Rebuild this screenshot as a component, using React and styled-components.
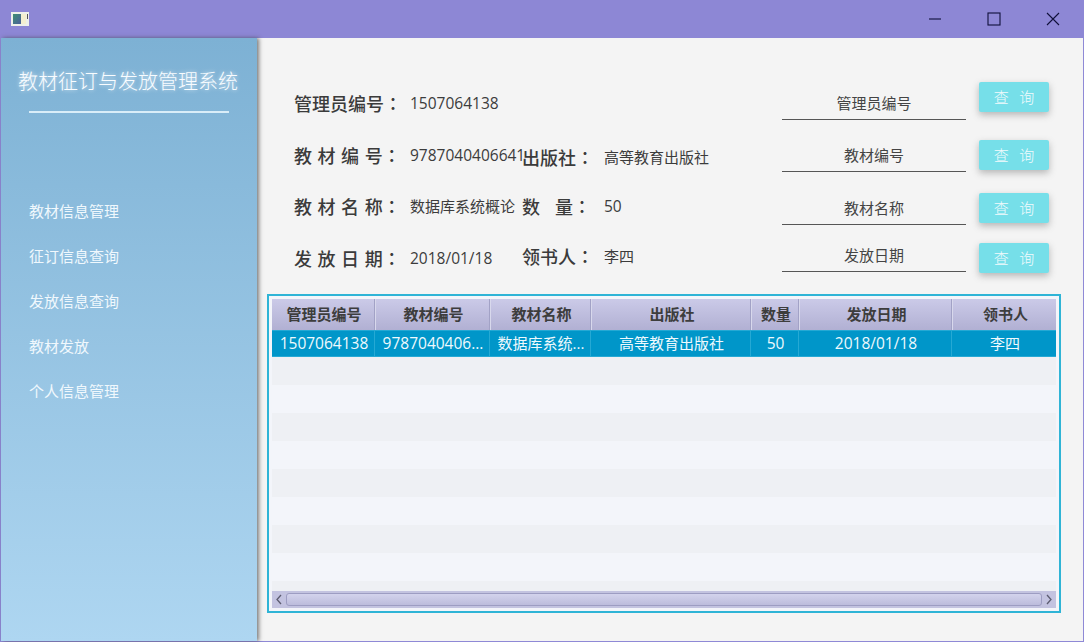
import React from "react";
import styled, { createGlobalStyle } from "styled-components";

const Global = createGlobalStyle`
  html, body { margin: 0; padding: 0; }
  body { width: 1084px; height: 642px; overflow: hidden; background: #f4f4f4; }
  * { box-sizing: border-box; }
`;

const FONT = `"Open Sans", "Noto Sans CJK SC", sans-serif`;

const Win = styled.div`
  width: 1084px; height: 642px; display: flex; flex-direction: column;
  font-family: ${FONT}; border: 1px solid #8f89d6; border-top: 0; background: #f4f4f4;
`;
const TitleBar = styled.div`
  height: 38px; flex: none; margin: 0 -1px; background: #8d87d5;
  display: flex; align-items: center; padding: 0 2px 0 11px;
`;
const Controls = styled.div`
  margin-left: auto; display: flex;
`;
const CtrlBtn = styled.div`
  width: 59px; height: 38px; display: flex; align-items: center; justify-content: center;
`;
const Body = styled.div`
  flex: 1; display: flex; min-height: 0;
`;
const Side = styled.aside`
  width: 256px; flex: none; display: flex; flex-direction: column; align-items: center;
  background: linear-gradient(180deg, #7db1d4 0%, #aed6f1 100%);
  box-shadow: 2px 0 4px rgba(60, 60, 60, .65);
  position: relative; z-index: 1; padding-top: 30px;
`;
const Brand = styled.h1`
  margin: 0 2px 0 0; font-size: 20px; font-weight: 300; line-height: 26px; color: #f8fcff; white-space: nowrap;
  text-shadow: 0 0 4px rgba(255,255,255,.75);
  font-family: "Noto Sans CJK SC", sans-serif;
`;
const BrandRule = styled.div`
  width: 200px; height: 2px; margin-top: 17px; background: #d9edf8;
`;
const Menu = styled.nav`
  align-self: stretch; display: flex; flex-direction: column; padding: 75px 0 0 28px;
`;
const MenuItem = styled.div`
  height: 45px; line-height: 45px; font-size: 15px; color: #f0f8fd; font-weight: 400;
  font-family: "Noto Sans CJK SC", sans-serif;
`;
const Main = styled.main`
  flex: 1; min-width: 0; padding: 38px 22px 0 10px; display: flex; flex-direction: column;
`;
const Form = styled.div`
  display: flex; flex-direction: column; padding: 0 12px 12px 27px;
`;
const FormRow = styled.div`
  display: grid; grid-template-columns: 116px 112px 82px 178px 184px 83px;
  height: ${p => p.$h}px; align-items: center;
`;
const Label = styled.span`
  font-size: 18px; font-weight: 500; color: #3b3b3b; white-space: pre;
  word-spacing: ${p => p.$ws || 0}px; line-height: 24px;
  font-family: "Noto Sans CJK SC", sans-serif;
  transform: translateY(${p => p.$dy || 0}px);
`;
const Colon = styled.span`
  font-family: "Noto Sans CJK TC", sans-serif;
`;
const Value = styled.span`
  font-size: ${p => p.$cjk ? 15 : 15.5}px; color: #3c3c3c; white-space: nowrap; line-height: 20px;
  transform: translateY(${p => p.$dy || 0}px);
`;
const Field = styled.div`
  width: 184px; height: 33px; border-bottom: 1.5px solid #555;
  font-size: 15px; color: #444; text-align: center; line-height: 31px; font-weight: 400;
  font-family: "Noto Sans CJK SC", sans-serif;
  transform: translateY(${p => p.$dy || 0}px);
`;
const QueryBtn = styled.button`
  width: 70px; height: 30px; margin-left: 13px; border: 0; border-radius: 2px; padding: 0 0 1px;
  background: #76dfe9; color: #f3fbfd; font-size: 15px; font-family: "Noto Sans CJK SC", sans-serif;
  font-weight: 300; word-spacing: 2px; white-space: pre;
  box-shadow: 0 3px 7px rgba(90,90,90,.4);
  transform: translateY(${p => p.$dy || 0}px);
`;
const TableBox = styled.section`
  height: 319px; border: 2px solid #2fb4d6; padding: 3px; background: #f3f5fa;
  display: flex; flex-direction: column;
`;
const COLS = "103px 115px 101px 160px 48px 153px 104px";
const Head = styled.div`
  display: grid; grid-template-columns: ${COLS}; height: 31px; flex: none;
  background: linear-gradient(180deg, #cbcae8 0%, #b1b0d3 100%);
`;
const HeadCell = styled.div`
  font-size: 15px; font-weight: 700; color: #3d3d3d; text-align: center; line-height: 30px;
  font-family: "Noto Sans CJK SC", sans-serif; padding-left: 2px;
  border-right: 1px solid #a2a2c6; border-left: 1px solid #d8d8ec;
  &:first-child { border-left: 0; } &:last-child { border-right: 0; }
`;
const Selected = styled.div`
  display: grid; grid-template-columns: ${COLS}; height: 27px; flex: none;
  background: #0096c9; border-top: 1px solid #25a9d4; border-bottom: 1px solid #25a9d4;
`;
const Cell = styled.div`
  font-size: ${p => p.$cjk ? 15 : 15.5}px; color: #eef9fd; text-align: center; line-height: 25px;
  white-space: nowrap; padding-left: 2px;
  border-right: 1px solid #25a9d4;
  &:last-child { border-right: 0; }
`;
const Rows = styled.div`
  flex: 1; min-height: 0; overflow: hidden;
`;
const Stripe = styled.div`
  height: 28px; background: ${p => p.$odd ? "#eef0f4" : "#f3f5fa"};
`;
const ScrollBar = styled.div`
  height: 17px; flex: none; display: flex; align-items: center; background: #c3c3e0;
`;
const Arrow = styled.div`
  width: 14px; height: 17px; flex: none; display: flex; align-items: center; justify-content: center;
`;
const Thumb = styled.div`
  flex: 1; height: 13px; border-radius: 3px; border: 1px solid #9d9dc2;
  background: linear-gradient(180deg, #d3d3ec 0%, #bcbcdc 100%);
`;

const AppIcon = () => (
  <svg width="18" height="14" viewBox="0 0 18 14">
    <defs>
      <linearGradient id="ic" x1="0" y1="0" x2="1" y2="1">
        <stop offset="0" stopColor="#3f8f72" />
        <stop offset="1" stopColor="#4a5f9c" />
      </linearGradient>
    </defs>
    <rect width="18" height="14" fill="#eef0ea" />
    <rect x="2" y="2" width="8" height="10" fill="url(#ic)" />
    <rect x="10" y="2" width="5" height="10" fill="#f4efd0" />
    <rect x="16" y="2" width="1" height="5" fill="#555" />
  </svg>
);

const Stroke = ({ children }) => (
  <svg width="14" height="14" viewBox="0 0 14 14" fill="none" stroke="#10103a" strokeWidth="1.1">{children}</svg>
);

const cols = ["管理员编号", "教材编号", "教材名称", "出版社", "数量", "发放日期", "领书人"];
const row = [
  { t: "1507064138" },
  { t: "9787040406..." },
  { t: "数据库系统...", cjk: true },
  { t: "高等教育出版社", cjk: true },
  { t: "50" },
  { t: "2018/01/18" },
  { t: "李四", cjk: true },
];

export default function App() {
  return (
    <Win>
      <Global />
      <TitleBar>
        <AppIcon />
        <Controls>
          <CtrlBtn><Stroke><path d="M1 7h12" /></Stroke></CtrlBtn>
          <CtrlBtn><Stroke><rect x="1" y="1" width="12" height="12" /></Stroke></CtrlBtn>
          <CtrlBtn><Stroke><path d="M1 1l12 12M13 1L1 13" /></Stroke></CtrlBtn>
        </Controls>
      </TitleBar>
      <Body>
        <Side>
          <Brand>教材征订与发放管理系统</Brand>
          <BrandRule />
          <Menu>
            {["教材信息管理", "征订信息查询", "发放信息查询", "教材发放", "个人信息管理"].map(m => (
              <MenuItem key={m}>{m}</MenuItem>
            ))}
          </Menu>
        </Side>
        <Main>
          <Form>
            <FormRow $h={52}>
              <Label $dy={1}>管理员编号<Colon>：</Colon></Label>
              <Value $dy={1}>1507064138</Value>
              <span /><span />
              <Field $dy={1}>管理员编号</Field>
              <QueryBtn $dy={-5}>查  询</QueryBtn>
            </FormRow>
            <FormRow $h={52}>
              <Label $ws={1.5} $dy={1}>教 材 编 号<Colon>：</Colon></Label>
              <Value $dy={1}>9787040406641</Value>
              <Label $dy={3}>出版社<Colon>：</Colon></Label>
              <Value $cjk $dy={3}>高等教育出版社</Value>
              <Field $dy={1}>教材编号</Field>
              <QueryBtn $dy={1}>查  询</QueryBtn>
            </FormRow>
            <FormRow $h={52}>
              <Label $ws={1.5}>教 材 名 称<Colon>：</Colon></Label>
              <Value $cjk>数据库系统概论</Value>
              <Label $ws={11}>数 量<Colon>：</Colon></Label>
              <Value>50</Value>
              <Field $dy={2}>教材名称</Field>
              <QueryBtn $dy={2}>查  询</QueryBtn>
            </FormRow>
            <FormRow $h={50}>
              <Label $ws={1.5} $dy={1}>发 放 日 期<Colon>：</Colon></Label>
              <Value $dy={1}>2018/01/18</Value>
              <Label $dy={-1}>领书人<Colon>：</Colon></Label>
              <Value $cjk $dy={-1}>李四</Value>
              <Field $dy={-2}>发放日期</Field>
              <QueryBtn $dy={1}>查  询</QueryBtn>
            </FormRow>
          </Form>
          <TableBox>
            <Head>{cols.map(c => <HeadCell key={c}>{c}</HeadCell>)}</Head>
            <Selected>{row.map(c => <Cell key={c.t} $cjk={c.cjk}>{c.t}</Cell>)}</Selected>
            <Rows>
              {[0, 1, 2, 3, 4, 5, 6, 7, 8].map(i => <Stripe key={i} $odd={i % 2 === 0} />)}
            </Rows>
            <ScrollBar>
              <Arrow>
                <svg width="8" height="11" viewBox="0 0 8 11" fill="none" stroke="#5c5c70" strokeWidth="1.3"><path d="M6 1L2 5.5 6 10" /></svg>
              </Arrow>
              <Thumb />
              <Arrow>
                <svg width="8" height="11" viewBox="0 0 8 11" fill="none" stroke="#5c5c70" strokeWidth="1.3"><path d="M2 1l4 4.5L2 10" /></svg>
              </Arrow>
            </ScrollBar>
          </TableBox>
        </Main>
      </Body>
    </Win>
  );
}
